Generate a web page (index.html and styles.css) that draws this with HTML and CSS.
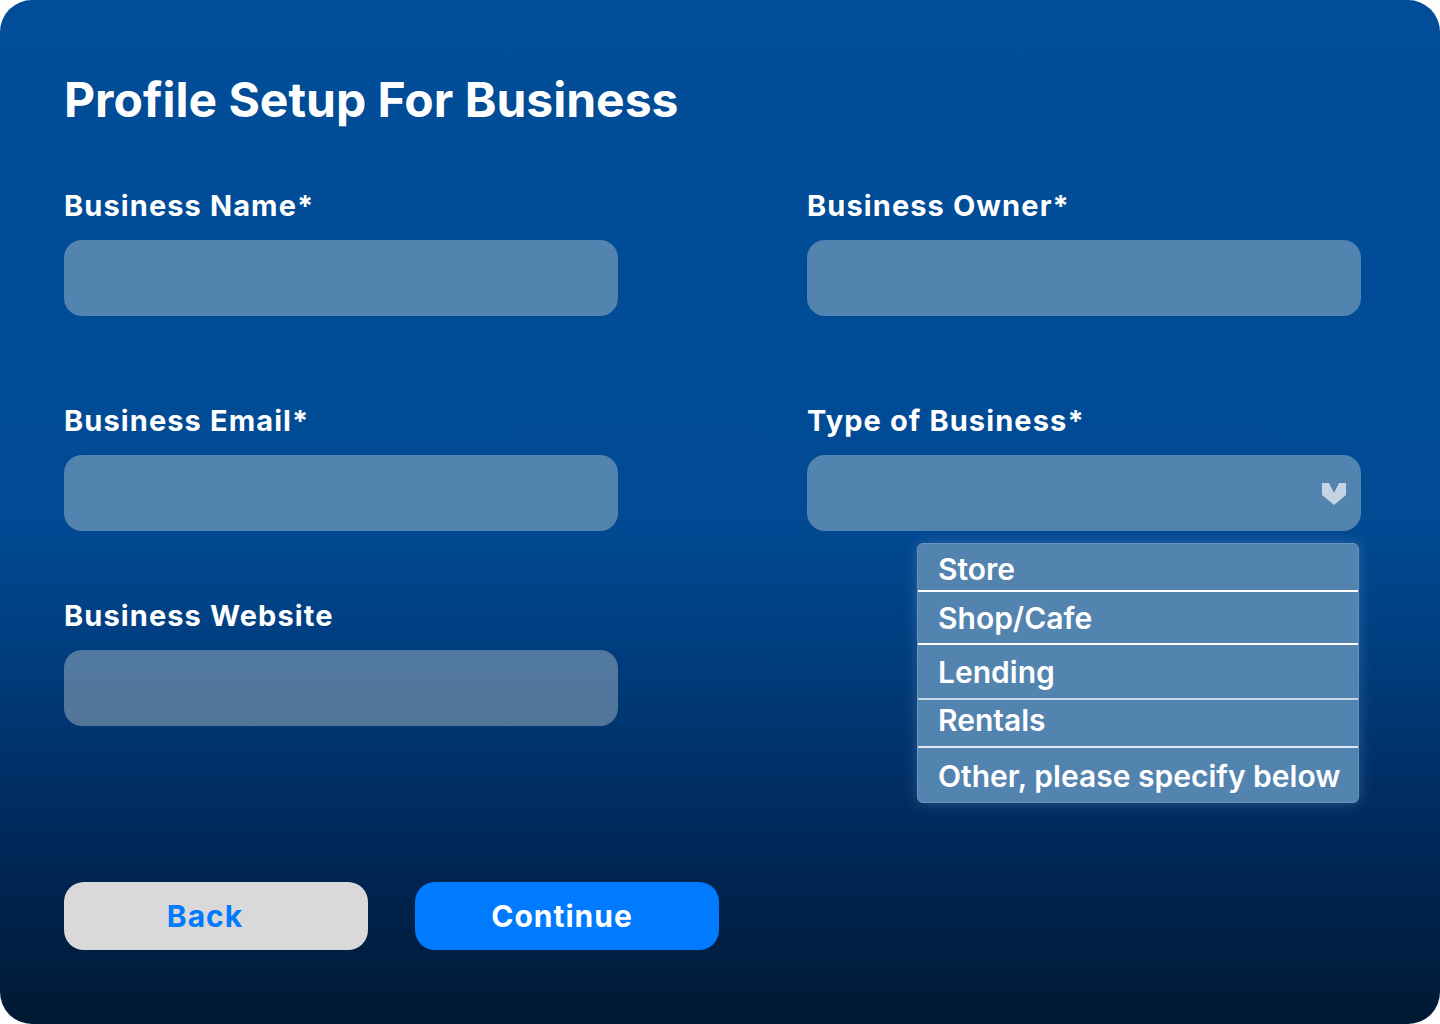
FILE: index.html
```html
<!DOCTYPE html>
<html lang="en">
<head>
<meta charset="utf-8">
<title>Profile Setup For Business</title>
<link rel="stylesheet" href="styles.css">
</head>
<body>
<main class="card">
  <h1 class="title">Profile Setup For Business</h1>
  <div class="form-grid">
    <div class="field">
      <label class="label">Business Name*</label>
      <div class="input"></div>
    </div>
    <div class="field">
      <label class="label">Business Owner*</label>
      <div class="input"></div>
    </div>
    <div class="field field--spaced">
      <label class="label">Business Email*</label>
      <div class="input"></div>
    </div>
    <div class="field field--spaced field--select">
      <label class="label">Type of Business*</label>
      <div class="input select">
        <svg class="chevron" width="24" height="22" viewBox="0 0 24 22"><polygon points="0,0 7,0 12,10 17,0 24,0 24,12 12,22 0,12" fill="#C5D3E2"/></svg>
      </div>
      <ul class="menu">
        <li class="menu-item">Store</li>
        <li class="menu-item">Shop/Cafe</li>
        <li class="menu-item">Lending</li>
        <li class="menu-item">Rentals</li>
        <li class="menu-item">Other, please specify below</li>
      </ul>
    </div>
    <div class="field">
      <label class="label">Business Website</label>
      <div class="input input--alpha"></div>
    </div>
  </div>
  <div class="actions">
    <button class="btn btn--back">Back</button>
    <button class="btn btn--continue">Continue</button>
  </div>
</main>
</body>
</html>
```

FILE: styles.css
```css
html, body {
  margin: 0;
  padding: 0;
  background: #ffffff;
}

.card {
  width: 1440px;
  height: 1024px;
  box-sizing: border-box;
  border-radius: 32px;
  padding: 64px 79px 0 64px;
  display: flex;
  flex-direction: column;
  background: linear-gradient(180deg, #014D97 0%, #014B95 50%, #003B7A 66%, #00285A 82%, #001933 100%);
  font-family: "Inter", "Liberation Sans", sans-serif;
  color: #ffffff;
  overflow: hidden;
}

.title {
  margin: 0;
  font-size: 48px;
  line-height: 72px;
  font-weight: 700;
  letter-spacing: 0px;
}

.form-grid {
  margin-top: 52px;
  display: grid;
  grid-template-columns: 554px 554px;
  column-gap: 189px;
  row-gap: 67px;
}

.field {
  display: flex;
  flex-direction: column;
  gap: 16px;
  position: relative;
}

.field--spaced {
  margin-top: 20px;
}

.label {
  font-size: 29px;
  line-height: 36px;
  font-weight: 700;
  letter-spacing: 1.1px;
}

.input {
  height: 76px;
  border-radius: 18px;
  background: #5383AF;
}

.input--alpha {
  background: rgba(206, 212, 212, 0.4);
}

.select {
  display: flex;
  align-items: center;
  justify-content: flex-end;
  padding-right: 15px;
}

.chevron {
  display: block;
  margin-top: 2px;
}

.menu {
  position: absolute;
  top: 140px;
  left: 110px;
  width: 442px;
  margin: 0;
  padding: 0;
  list-style: none;
  background: #5383AF;
  border: 1px solid #6A93BB;
  border-radius: 6px;
  box-sizing: border-box;
  box-shadow: 0 0 14px rgba(120, 160, 210, 0.35);
  overflow: hidden;
}

.menu-item {
  display: flex;
  align-items: center;
  padding-left: 20px;
  font-size: 30px;
  font-weight: 600;
  color: #ffffff;
  border-bottom: 2px solid #ffffff;
  box-sizing: border-box;
}

.menu-item:nth-child(1) { height: 48px; padding-top: 4px; }
.menu-item:nth-child(2) { height: 53px; }
.menu-item:nth-child(3) { height: 55px; border-bottom-color: #C9D7E6; }
.menu-item:nth-child(4) { height: 48px; padding-bottom: 6px; border-bottom-color: #DDE6F0; }
.menu-item:nth-child(5) { height: 54px; border-bottom: none; padding-top: 2px; }

.actions {
  margin-top: 156px;
  display: flex;
  gap: 47px;
}

.btn {
  width: 304px;
  height: 68px;
  border: none;
  border-radius: 20px;
  font-family: "Inter", "Liberation Sans", sans-serif;
  font-size: 30px;
  font-weight: 700;
  letter-spacing: 1px;
  padding: 0;
}

.btn--back {
  background: #D9D9D9;
  color: #007BFF;
  padding-right: 22px;
}

.btn--continue {
  background: #007BFF;
  color: #ffffff;
  padding-right: 10px;
}
```
